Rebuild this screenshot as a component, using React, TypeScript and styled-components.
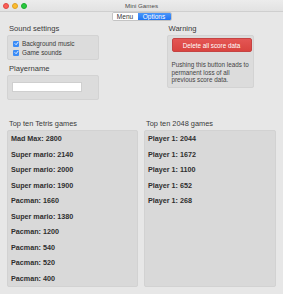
import styled, { createGlobalStyle } from "styled-components";

const GlobalStyle = createGlobalStyle`
    html, body {
        margin: 0;
        padding: 0;
        background: #e7e7e7;
    }
    * {
        box-sizing: border-box;
    }
`;

const tetrisScores = [
    "Mad Max: 2800",
    "Super mario: 2140",
    "Super mario: 2000",
    "Super mario: 1900",
    "Pacman: 1660",
    "Super mario: 1380",
    "Pacman: 1200",
    "Pacman: 540",
    "Pacman: 520",
    "Pacman: 400",
];

const scores2048 = ["Player 1: 2044", "Player 1: 1672", "Player 1: 1100", "Player 1: 652", "Player 1: 268"];

const Window = styled.div`
    width: 283px;
    height: 294px;
    background: #e7e7e7;
    font-family: "Liberation Sans", Arial, sans-serif;
    color: #2b2b2b;
    display: flex;
    flex-direction: column;
    overflow: hidden;
`;

const TitleBar = styled.div`
    height: 12px;
    display: grid;
    grid-template-columns: 1fr auto 1fr;
    align-items: center;
    padding: 0 3px;
    background: linear-gradient(#ececec, #e2e2e2);
    border-bottom: 1px solid #cfcfcf;
`;

const Lights = styled.div`
    display: flex;
    gap: 3px;
`;

const Light = styled.span<{ $color: string; $border: string }>`
    width: 6px;
    height: 6px;
    border-radius: 50%;
    background: ${p => p.$color};
    border: 0.5px solid ${p => p.$border};
`;

const WindowTitle = styled.div`
    font-size: 6.2px;
    color: #4a4a4a;
`;

const Toolbar = styled.div`
    display: flex;
    justify-content: center;
    height: 9px;
`;

const Segmented = styled.div`
    display: flex;
    border: 0.5px solid #c4c4c4;
    border-radius: 2px;
    overflow: hidden;
    background: #fff;
`;

const Segment = styled.div<{ $active?: boolean }>`
    display: flex;
    align-items: center;
    padding: 0 ${p => (p.$active ? "3px" : "4px")};
    font-size: 6.5px;
    color: ${p => (p.$active ? "#fff" : "#333")};
    background: ${p => (p.$active ? "linear-gradient(#4b97fa, #1f74f3)" : "#fff")};
    min-width: ${p => (p.$active ? "33px" : "25px")};
    justify-content: center;
`;

const Content = styled.div`
    padding: 3px 7px 0 7px;
    display: grid;
    grid-template-columns: 131px 132px;
    column-gap: 6px;
`;

const Column = styled.div<{ $center?: boolean }>`
    display: flex;
    flex-direction: column;
    align-items: ${p => (p.$center ? "center" : "flex-start")};
    gap: 4px;
`;

const Section = styled.div<{ $width?: number }>`
    display: flex;
    flex-direction: column;
    width: ${p => (p.$width ? `${p.$width}px` : "100%")};
`;

const Label = styled.div<{ $size?: number }>`
    font-size: ${p => p.$size ?? 7.6}px;
    line-height: 10px;
    height: 10px;
    padding-left: 2px;
    margin-bottom: 1px;
    color: #3a3a3a;
    white-space: nowrap;
`;

const GroupBox = styled.div<{ $padding: string }>`
    background: #dcdcdc;
    border: 0.5px solid #d3d3d3;
    border-radius: 2px;
    padding: ${p => p.$padding};
    display: flex;
    flex-direction: column;
`;

const CheckRow = styled.label`
    display: flex;
    align-items: center;
    gap: 3px;
    height: 9px;
    font-size: 6.4px;
    color: #3a3a3a;
`;

const CheckBox = styled.span`
    width: 6px;
    height: 6px;
    border-radius: 1px;
    background: #3b8cf7;
    display: flex;
    align-items: center;
    justify-content: center;
`;

const TextInput = styled.input`
    width: 70px;
    height: 10px;
    border: 0.5px solid #cfcfcf;
    background: #fff;
    padding: 0;
    outline: none;
`;

const DangerButton = styled.button`
    width: 80px;
    height: 14px;
    padding: 0;
    border: 0.5px solid #c54343;
    border-radius: 2px;
    background: linear-gradient(#e45654, #d9443f);
    color: #fff;
    font-family: "Liberation Sans", Arial, sans-serif;
    font-size: 6.3px;
`;

const Note = styled.p`
    margin: 9px 0 0 0;
    font-size: 6.3px;
    line-height: 7.6px;
    color: #444;
`;

const ListBox = styled.div`
    height: 157px;
    background: #d9d9d9;
    border: 0.5px solid #d2d2d2;
    border-radius: 2px;
    padding: 0 3px;
    display: flex;
    flex-direction: column;
`;

const ListItem = styled.div`
    height: 15.5px;
    line-height: 15.5px;
    font-size: 7.2px;
    font-weight: bold;
    color: #2e2e2e;
`;

const Bottom = styled(Content)`
    padding-top: 19px;
`;

function Check() {
    return (
        <CheckBox>
            <svg width="5" height="5" viewBox="0 0 10 10">
                <path d="M2 5.2 L4.2 7.4 L8 2.6" fill="none" stroke="#fff" strokeWidth="1.8" strokeLinecap="round" strokeLinejoin="round" />
            </svg>
        </CheckBox>
    );
}

export default function App() {
    return (
        <>
            <GlobalStyle />
            <Window>
                <TitleBar>
                    <Lights>
                        <Light $color="#fc5f57" $border="#de4842" />
                        <Light $color="#fdbc2e" $border="#dea123" />
                        <Light $color="#28c840" $border="#1dac2c" />
                    </Lights>
                    <WindowTitle>Mini Games</WindowTitle>
                    <div />
                </TitleBar>
                <Toolbar>
                    <Segmented>
                        <Segment>Menu</Segment>
                        <Segment $active>Options</Segment>
                    </Segmented>
                </Toolbar>
                <Content>
                    <Column>
                        <Section $width={92}>
                            <Label>Sound settings</Label>
                            <GroupBox $padding="3px 5px 2px 5px">
                                <CheckRow>
                                    <Check />
                                    Background music
                                </CheckRow>
                                <CheckRow>
                                    <Check />
                                    Game sounds
                                </CheckRow>
                            </GroupBox>
                        </Section>
                        <Section $width={92}>
                            <Label>Playername</Label>
                            <GroupBox $padding="6px 4px 7px 4px">
                                <TextInput />
                            </GroupBox>
                        </Section>
                    </Column>
                    <Column $center>
                        <Section $width={87}>
                            <Label>Warning</Label>
                            <GroupBox $padding="2px 3px 3px 4px">
                                <DangerButton>Delete all score data</DangerButton>
                                <Note>
                                    Pushing this button leads to
                                    <br />
                                    permanent loss of all
                                    <br />
                                    previous score data.
                                </Note>
                            </GroupBox>
                        </Section>
                    </Column>
                </Content>
                <Bottom>
                    <Section>
                        <Label $size={7.4}>Top ten Tetris games</Label>
                        <ListBox>
                            {tetrisScores.map((score, index) => (
                                <ListItem key={index}>{score}</ListItem>
                            ))}
                        </ListBox>
                    </Section>
                    <Section>
                        <Label $size={7.4}>Top ten 2048 games</Label>
                        <ListBox>
                            {scores2048.map((score, index) => (
                                <ListItem key={index}>{score}</ListItem>
                            ))}
                        </ListBox>
                    </Section>
                </Bottom>
            </Window>
        </>
    );
}
